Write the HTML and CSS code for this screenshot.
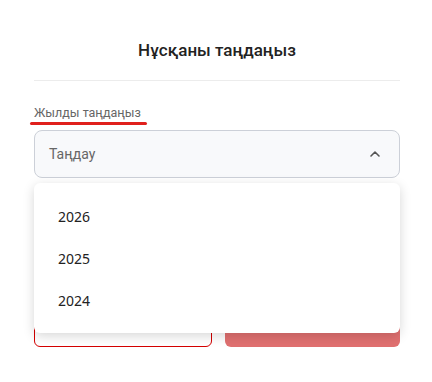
FILE: index.html
```html
<!DOCTYPE html>
<html lang="kk">
<head>
<meta charset="UTF-8" />
<meta name="viewport" content="width=device-width, initial-scale=1" />
<title>Нұсқаны таңдаңыз</title>
<link rel="stylesheet" href="styles.css">
</head>
<body>
<div class="sheet">
  <div class="head">
    <h2>Нұсқаны таңдаңыз</h2>
  </div>

  <div class="field">
    <label class="lbl">Жылды таңдаңыз</label>
    <div class="select-wrap">
      <div class="select">
        <span class="placeholder">Таңдау</span>
        <svg class="chev" width="12" height="8" viewBox="0 0 12 8" aria-hidden="true">
          <path d="M2 6 L6 2 L10 6" fill="none" stroke="#555" stroke-width="1.6" stroke-linecap="round" stroke-linejoin="round"/>
        </svg>
      </div>
      <ul class="menu">
        <li>2026</li>
        <li>2025</li>
        <li>2024</li>
      </ul>
    </div>
  </div>

  <div class="actions">
    <button class="btn btn-outline">Болдырмау</button>
    <button class="btn btn-fill">Таңдау</button>
  </div>
</div>
</body>
</html>
```

FILE: styles.css
```css
body {
  margin: 0; background: #fff; color: #222;
  font-family: Roboto, "Noto Sans", sans-serif;
}
.sheet {
  padding: 0 32px 0 34px;
}

.head {
  padding: 38px 0 18px;
  text-align: center;
  border-bottom: 1px solid #ececec;
}
.head h2 {
  margin: 0; font-size: 17px; line-height: 24px; font-weight: 500; color: #222;
}

.field { margin-top: 21px; }
.lbl {
  position: relative; display: inline-block;
  font-size: 12.5px; line-height: 18px; color: #666;
}
/* красная отметка под подписью */
.lbl::after {
  content: "";
  position: absolute; left: -4px; right: -6px; bottom: -3px;
  height: 3px; border-radius: 2px; background: #e0201c;
}

.select-wrap { position: relative; margin-top: 8px; }
.select {
  display: flex; align-items: center; justify-content: space-between;
  height: 46px; padding: 0 18px 0 14px;
  border: 1px solid #ccd0d8; border-radius: 8px;
  background: #f8f9fb;
}
.placeholder { font-size: 14px; color: #666; }
.chev { display: block; }

.menu {
  position: absolute; z-index: 5; top: calc(100% + 5px); left: 0; right: 0;
  list-style: none; margin: 0; padding: 13px 0 11px;
  background: #fff; border-radius: 6px;
  box-shadow: 0 3px 12px rgba(0,0,0,0.16);
  font-family: "Noto Sans", sans-serif;
}
.menu li {
  height: 42px; line-height: 42px; padding-left: 24px;
  font-size: 14px; color: #222;
}

.actions {
  display: flex; gap: 13px;
  margin-top: 125px;
}
.btn {
  flex: 1 1 0; min-width: 0; height: 44px; padding: 0; border-radius: 6px;
  font-family: Roboto, sans-serif; font-size: 14px; font-weight: 600;
}
.btn-outline { background: #fff; border: 1px solid #d40000; color: #d40000; }
.btn-fill { background: #e07070; border: none; color: #fff; }
```
